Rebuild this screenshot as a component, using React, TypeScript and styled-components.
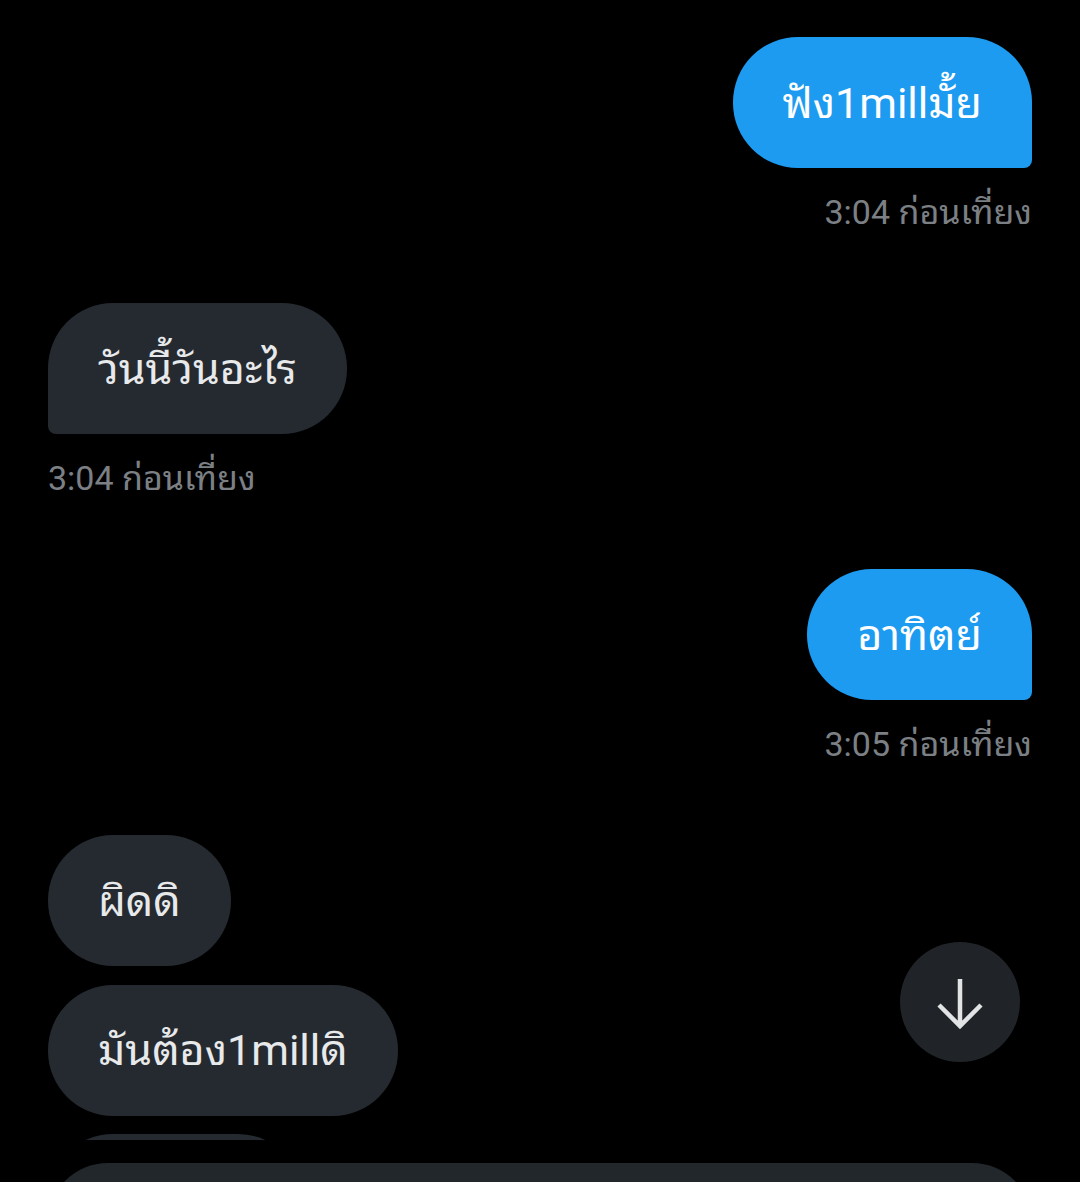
import React from "react";
import styled, { createGlobalStyle, css } from "styled-components";

const GlobalStyle = createGlobalStyle`
  html, body {
    margin: 0;
    padding: 0;
    background: #000000;
  }
  body {
    font-family: Roboto, "Noto Sans Thai Looped", "Noto Sans Thai UI", Loma, Garuda, "Noto Sans Thai", "Noto Sans", sans-serif;
  }
`;

type Side = "sent" | "received";

const Page = styled.div`
  position: relative;
  width: 1080px;
  height: 1182px;
  overflow: hidden;
  background: #000000;
  display: flex;
  flex-direction: column;
`;

const MessageList = styled.div`
  flex: 0 0 1140px;
  overflow: hidden;
  box-sizing: border-box;
  padding: 37px 48px 0;
  display: flex;
  flex-direction: column;
`;

const Group = styled.div<{ $side: Side }>`
  display: flex;
  flex-direction: column;
  align-items: ${(p) => (p.$side === "sent" ? "flex-end" : "flex-start")};
  gap: 18.5px;
  margin-bottom: 71px;
`;

const Bubble = styled.div<{ $side: Side; $tail?: boolean; $width?: number }>`
  box-sizing: border-box;
  height: 131px;
  padding: 0 50px 9px;
  display: flex;
  align-items: center;
  font-size: 43px;
  white-space: nowrap;
  ${(p) => p.$width && `width: ${p.$width}px;`}
  ${(p) =>
    p.$side === "sent"
      ? css`
          background: #1d9bf0;
          color: #ffffff;
          border-radius: ${p.$tail ? "65px 65px 8px 65px" : "65px"};
        `
      : css`
          background: #252a30;
          color: #e7e9ea;
          border-radius: ${p.$tail ? "65px 65px 65px 8px" : "65px"};
        `}
`;

const BubbleWrap = styled.div`
  display: flex;
  flex-direction: column;
  align-items: inherit;
`;

const StampRow = styled.div`
  padding-top: 24px;
`;

const Stamp = styled.div`
  line-height: 40px;
  font-size: 34px;
  color: #7c8085;
`;

const Composer = styled.div`
  margin: 23px 48px 0;
  height: 120px;
  flex: 0 0 120px;
  border-radius: 60px;
  background: #22272c;
`;

const ScrollButton = styled.button`
  position: absolute;
  right: 60px;
  bottom: 120px;
  width: 120px;
  height: 120px;
  border-radius: 50%;
  border: none;
  padding: 0;
  background: #202327;
  display: flex;
  align-items: center;
  justify-content: center;
  cursor: pointer;
`;

const ArrowDown = () => (
  <svg width="48" height="56" viewBox="0 0 48 56" fill="none">
    <path
      d="M24 5V52M3 31l21 21 21-21"
      stroke="#e1e3e5"
      strokeWidth="4.5"
      strokeLinecap="butt"
      strokeLinejoin="miter"
    />
  </svg>
);

export default function App() {
  return (
    <>
      <GlobalStyle />
      <Page>
        <MessageList>
          <Group $side="sent">
            <BubbleWrap>
              <Bubble $side="sent" $tail>ฟัง1millมั้ย</Bubble>
              <StampRow>
                <Stamp>3:04 ก่อนเที่ยง</Stamp>
              </StampRow>
            </BubbleWrap>
          </Group>
          <Group $side="received">
            <BubbleWrap>
              <Bubble $side="received" $tail>วันนี้วันอะไร</Bubble>
              <StampRow>
                <Stamp>3:04 ก่อนเที่ยง</Stamp>
              </StampRow>
            </BubbleWrap>
          </Group>
          <Group $side="sent">
            <BubbleWrap>
              <Bubble $side="sent" $tail>อาทิตย์</Bubble>
              <StampRow>
                <Stamp>3:05 ก่อนเที่ยง</Stamp>
              </StampRow>
            </BubbleWrap>
          </Group>
          <Group $side="received">
            <Bubble $side="received">ผิดดิ</Bubble>
            <Bubble $side="received">มันต้อง1millดิ</Bubble>
            <Bubble $side="received" $width={255} />
          </Group>
        </MessageList>
        <Composer />
        <ScrollButton aria-label="Scroll to bottom">
          <ArrowDown />
        </ScrollButton>
      </Page>
    </>
  );
}
